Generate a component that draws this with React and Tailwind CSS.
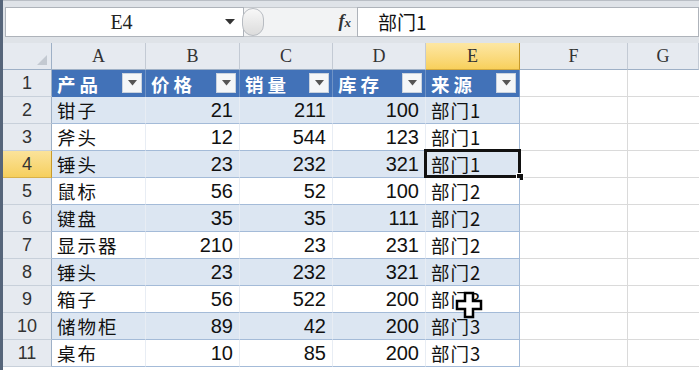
import React from 'react';

const cjk = { fontFamily: '"Noto Sans CJK SC", "Liberation Sans", sans-serif' };
const num = { fontFamily: '"Liberation Sans", Arial, sans-serif' };
const serif = { fontFamily: '"Liberation Serif", "Times New Roman", serif' };

const headers = ['产品', '价格', '销量', '库存', '来源'];

const rows = [
    ['钳子', 21, 211, 100, '部门1'],
    ['斧头', 12, 544, 123, '部门1'],
    ['锤头', 23, 232, 321, '部门1'],
    ['鼠标', 56, 52, 100, '部门2'],
    ['键盘', 35, 35, 111, '部门2'],
    ['显示器', 210, 23, 231, '部门2'],
    ['锤头', 23, 232, 321, '部门2'],
    ['箱子', 56, 522, 200, '部门3'],
    ['储物柜', 89, 42, 200, '部门3'],
    ['桌布', 10, 85, 200, '部门3'],
];

const cols = ['A', 'B', 'C', 'D', 'E', 'F', 'G'];

// little filter button in the table header
const FilterButton = () => (
    <div className="absolute right-[3px] top-[3px] w-[20px] h-[20px] bg-[#f4f6f8] border border-[#c9d2de] flex items-center justify-center">
        <svg width="9" height="6" viewBox="0 0 9 6">
            <path d="M0 0 H9 L4.5 5.5 Z" fill="#555" />
        </svg>
    </div>
);

const RowHead = ({ n, active }) => (
    <div
        className={`h-[27px] flex items-center justify-center text-[18px] leading-[22px] text-[#333] border-r border-b ${
            active
                ? 'bg-gradient-to-b from-[#fbe39a] to-[#f6cf5c] border-r-[#c79a2a] border-b-[#d8b14a]'
                : 'bg-[#e6eaf0] border-r-[#9eb0c6] border-b-[#c8d0da]'
        }`}
        style={num}
    >
        {n}
    </div>
);

export default function App() {
    return (
        <div className="w-[699px] h-[370px] overflow-hidden bg-white border-l-[3px] border-[#56657a] relative select-none">
            {/* formula bar */}
            <div className="h-[43px] bg-[#dfe3e8] border-t border-[#b9bec5] pt-[6px] pl-[2px] pb-[5px] flex">
                <div className="w-[239px] h-[30px] bg-white border border-[#aeb3ba] flex items-center">
                    <div className="flex-1 text-center text-[20px] leading-[24px] text-[#222] pl-[12px]" style={serif}>
                        E4
                    </div>
                    <svg width="10" height="6" viewBox="0 0 10 6" className="mr-[8px]">
                        <path d="M0 0 H10 L5 5.5 Z" fill="#333" />
                    </svg>
                </div>
                <div className="w-[113px] h-[30px] bg-[#f2f3f4] border-y border-[#c4c8cd] flex items-center relative">
                    <div className="w-[22px] h-[28px] rounded-full border border-[#b8bcc2] bg-gradient-to-b from-[#f8f8f8] to-[#dcdcdc] -ml-[2px]" />
                    <span className="absolute right-[6px] text-[18px] leading-[22px] italic font-bold text-[#333]" style={serif}>
                        f<span className="text-[13px]">x</span>
                    </span>
                </div>
                <div className="flex-1 h-[30px] bg-white border border-[#aeb3ba] flex items-center pl-[20px] text-[19px] leading-[24px] text-[#111]" style={cjk}>
                    部门1
                </div>
            </div>

            {/* sheet */}
            <div className="grid grid-cols-[49px_94px_94px_93px_93px_94px_108px_1fr]">
                {/* column header row */}
                <div className="h-[27px] bg-[#e6eaf0] border-r border-b border-[#9eb0c6] relative">
                    <svg width="10" height="10" viewBox="0 0 10 10" className="absolute right-[4px] bottom-[4px]">
                        <path d="M10 0 V10 H0 Z" fill="#c3c9d1" />
                    </svg>
                </div>
                {cols.map((c) => (
                    <div
                        key={c}
                        className={`h-[27px] flex items-center justify-center text-[18px] leading-[22px] text-[#333] border-r border-b ${
                            c === 'E'
                                ? 'bg-gradient-to-b from-[#fde7a3] to-[#f8d05b] border-r-[#c79a2a] border-b-[#d2a93e]'
                                : 'bg-[#e6eaf0] border-r-[#c3cad4] border-b-[#9eb0c6]'
                        }`}
                        style={serif}
                    >
                        {c}
                    </div>
                ))}

                {/* row 1: table header */}
                <RowHead n={1} />
                {headers.map((h) => (
                    <div
                        key={h}
                        className="h-[27px] bg-[#4272b8] border-r border-[#6f93c6] relative flex items-center pl-[5px] text-white font-bold text-[18.5px] leading-[24px] tracking-[4px]"
                        style={cjk}
                    >
                        {h}
                        <FilterButton />
                    </div>
                ))}
                <div className="h-[27px] border-r border-b border-[#dadada]" />
                <div className="h-[27px] border-b border-[#dadada]" />

                {/* data rows */}
                {rows.map((r, i) => {
                    const band = i % 2 === 0 ? 'bg-[#dce6f2]' : 'bg-white';
                    const line = 'border-b border-[#a4bbd8]';
                    return (
                        <React.Fragment key={i}>
                            <RowHead n={i + 2} active={i === 2} />
                            <div className={`h-[27px] ${band} ${line} border-r border-r-[#e8edf4] flex items-center pl-[5px] text-[18.5px] leading-[24px] tracking-[2px] text-[#111]`} style={cjk}>
                                {r[0]}
                            </div>
                            {[r[1], r[2], r[3]].map((v, j) => (
                                <div
                                    key={j}
                                    className={`h-[27px] ${band} ${line} border-r border-r-[#e8edf4] flex items-center justify-end pr-[6px] text-[20px] leading-[24px] text-[#111]`}
                                    style={num}
                                >
                                    {v}
                                </div>
                            ))}
                            <div className={`h-[27px] ${band} ${line} border-r border-r-[#a4bbd8] flex items-center pl-[5px] text-[18.5px] leading-[24px] tracking-[1px] text-[#111] relative`} style={cjk}>
                                {r[4]}
                                {i === 2 && (
                                    <div className="absolute -left-[2px] -top-[2px] -right-[2px] -bottom-[1px] border-[3px] border-[#111]">
                                        <div className="absolute -right-[6px] -bottom-[6px] w-[8px] h-[8px] bg-[#111] border border-white" />
                                    </div>
                                )}
                            </div>
                            <div className="h-[27px] border-r border-b border-[#dadada]" />
                            <div className="h-[27px] border-b border-[#dadada]" />
                        </React.Fragment>
                    );
                })}
            </div>

            {/* mouse cursor (white cross) */}
            <svg width="28" height="28" viewBox="0 0 28 28" className="absolute left-[452px] top-[291px]">
                <path d="M10 2 H18 V10 H26 V18 H18 V26 H10 V18 H2 V10 H10 Z" fill="#fff" stroke="#000" strokeWidth="2.5" />
            </svg>
        </div>
    );
}
